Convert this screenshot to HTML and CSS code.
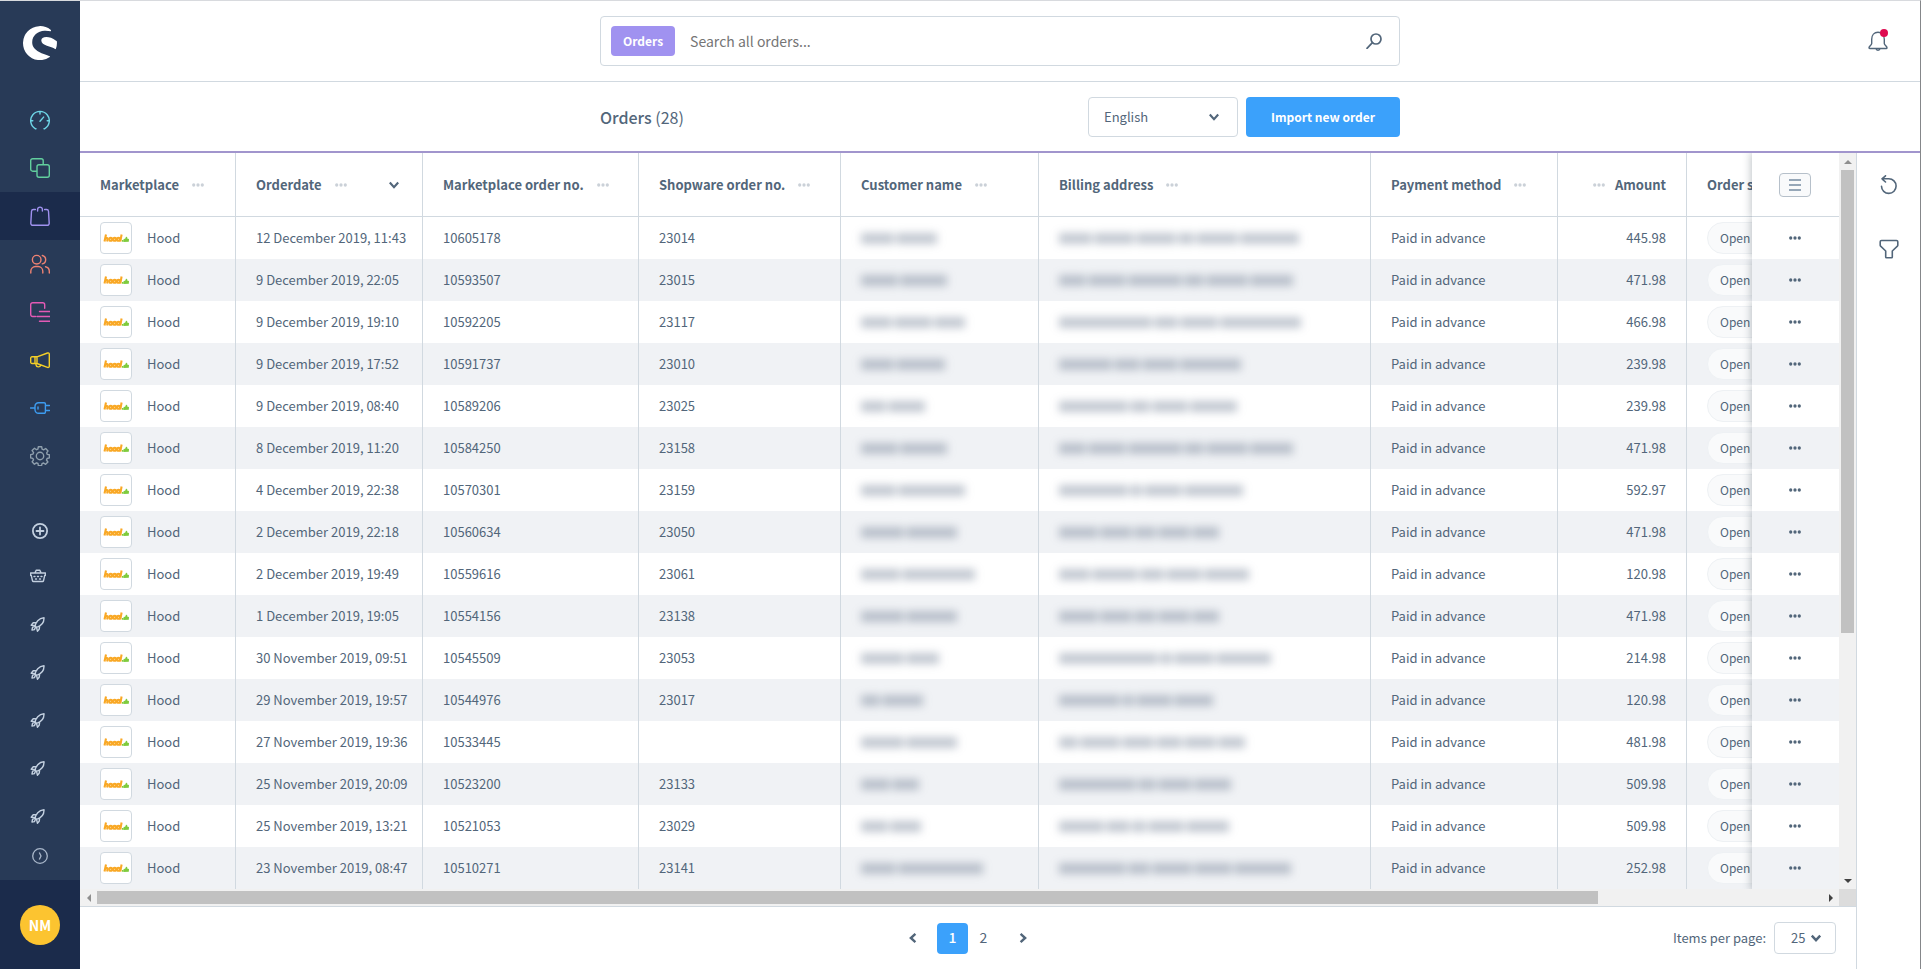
FILE: index.html
```html
<!DOCTYPE html>
<html lang="en">
<head>
<meta charset="utf-8">
<title>Orders</title>
<link rel="stylesheet" href="styles.css">
</head>
<body>
<svg class="defs" aria-hidden="true">
  <symbol id="i-rocket" viewBox="0 0 16 16"><path d="M5.2 10.2C5.6 6.4 8.6 2.2 14 1.8c.2 5-3.400 8.300-7.300 9.600zM5.600 6.600 3.200 6.800 1.200 9.200l3.600.2M9.600 10.600l-.4 2.600-1.800 2-.8-3.600M4.600 10.600 2.600 11.200l-.6 2.800 2.400-.4.8-1.600"/></symbol>
  <symbol id="i-dots" viewBox="0 0 14 4"><circle cx="2" cy="2" r="1.900"/><circle cx="7" cy="2" r="1.900"/><circle cx="12" cy="2" r="1.900"/></symbol>
  <symbol id="i-chevron" viewBox="0 0 10 10"><path d="m1.500 3 3.500 3.800L8.500 3"/></symbol>
  <symbol id="i-hood" viewBox="0 0 26 10">
    <g fill="none" stroke="#f9a825" stroke-width="2.100"><path d="M3 1.500 1.500 8.500M2.200 6c1-1.500 2.800-1.300 2.400.3L4.100 8.500"/><ellipse cx="7.700" cy="6.300" rx="1.500" ry="1.500"/><ellipse cx="11.700" cy="6.300" rx="1.500" ry="1.500"/><ellipse cx="15.500" cy="6.300" rx="1.500" ry="1.500"/><path d="M18.600 1.500 17.300 8.500"/></g>
    <path d="M19 7h1.300v1.700H19zM20.500 6.200l1.800-.7.700-1.800 1.200.3v1.600l1.800.5-.2 2.600-5.300.2z" fill="#7fcb3d"/>
  </symbol>
</svg>
<div class="app">
  <aside class="sidebar">
    <a class="logo" href="#" aria-label="Home">
      <svg viewBox="0 0 34 34"><path fill="#fff" d="M27.600 3.800A17 17 0 1 0 26.800 31c.3-.2.300-.5-.1-.7C21 27.800 9.200 25.600 9.200 16.300 9.200 9.300 15 5 21.400 4.700c2.600-.1 4.500.2 6.200.500.6.1.600-1 0-1.400zM33.900 15.500c-.2-.4-.4-.6-.8-.8-3.500-2.600-6.900-3.600-9.700-3.600-3.400 0-5.100 1.500-5.100 3.500 0 5.500 10.300 5.500 13.800 8.500.3.200.7.100.8-.3.900-2.300 1.200-4.800 1-7.300z"/></svg>
    </a>
    <nav class="nav">
      <a class="nav-item cyan" href="#" aria-label="Dashboard"><svg viewBox="0 0 20 20"><path d="M6 18.800H5.500A9.300 9.300 0 1 1 14.500 18.800H14M10 1.600V4M.8 10.800h2M17.200 10.800h2M10 11.300l3.600-4.200"/></svg></a>
      <a class="nav-item green" href="#" aria-label="Catalogues"><svg viewBox="0 0 20 20"><rect x="7" y="6.700" width="12.300" height="12.600" rx="2"/><path d="M6.500 13.200H2.700a2 2 0 0 1-2-2v-8.500a2 2 0 0 1 2-2h8.500a2 2 0 0 1 2 2v3.500"/></svg></a>
      <a class="nav-item violet active" href="#" aria-label="Orders" aria-current="page"><svg viewBox="0 0 20 20"><path d="M5.400 3.500H3.500a2 2 0 0 0-2 1.800L.8 17.200a2 2 0 0 0 2 2.100h14.400a2 2 0 0 0 2-2.100l-.7-11.900a2 2 0 0 0-2-1.800h-1.900M7.600 5V3.500a2.400 2.400 0 0 1 4.800 0V5"/></svg></a>
      <a class="nav-item coral" href="#" aria-label="Customers"><svg viewBox="0 0 20 20"><circle cx="6.700" cy="5.700" r="4.300"/><path d="M.8 19v-1.800a4.700 4.700 0 0 1 4.700-4.700h2.600a4.700 4.700 0 0 1 4.700 4.700V19M12.300 1.500a4.300 4.300 0 0 1 0 8.400M15.500 12.700a4.700 4.700 0 0 1 3.800 4.600V19"/></svg></a>
      <a class="nav-item pink" href="#" aria-label="Content"><svg viewBox="0 0 20 20"><path d="M5.500 14.500H2.700a2 2 0 0 1-2-2V2.700a2 2 0 0 1 2-2h10a2 2 0 0 1 2 2v3.500M9.500 9.500H20M7 14.500h13M9.500 19.300H20"/></svg></a>
      <a class="nav-item yellow" href="#" aria-label="Marketing"><svg viewBox="0 0 20 20"><path d="M7 6.800 17.500 3c1-.3 1.800.2 1.800 1.200v12c0 1-.8 1.500-1.800 1.200L7 13.500zM7 6.800H2a1.300 1.300 0 0 0-1.300 1.300v4.100A1.300 1.300 0 0 0 2 13.500h5M5 7v6.500M6 13.800v1a2.500 2.500 0 0 0 4.800.5"/></svg></a>
      <a class="nav-item blue" href="#" aria-label="Extensions"><svg viewBox="0 0 20 20"><path d="M.5 10H5M8.500 4.700h5.700a1.200 1.200 0 0 1 1.200 1.200v8.200a1.200 1.200 0 0 1-1.200 1.200H8.500A3.500 3.500 0 0 1 5 11.800V8.200a3.500 3.500 0 0 1 3.500-3.500zM15.500 7.500h4M15.500 12.500h4M8 9v2"/></svg></a>
      <a class="nav-item grey" href="#" aria-label="Settings"><svg viewBox="0 0 20 20"><circle cx="10" cy="10" r="3.700"/><path d="M8.300.8h3.400l.4 2.400 1.500.7 2.100-1.400 2.300 2.400-1.300 2 .6 1.500 2.100.4v3.100l-2.300.6-.6 1.500 1.400 2-2.300 2.300-2-1.300-1.600.6-.5 2.200H8.400L8 17.500l-1.500-.7-2.100 1.400-2.300-2.400 1.400-2-.7-1.400-2.200-.5V8.600L3 8.100l.6-1.500-1.500-2L4.500 2.300l2 1.400 1.400-.6z"/></svg></a>
    </nav>
    <nav class="nav nav-apps">
      <a class="nav-item nav-add" href="#" aria-label="Add"><svg viewBox="0 0 16 16"><circle cx="8" cy="8" r="7.100" stroke-width="1.800"/><path d="M8 4.500v7M4.500 8h7" stroke-width="1.800"/></svg></a>
      <a class="nav-item small" href="#" aria-label="Marketplaces"><svg viewBox="0 0 16 16"><path d="M.6 5h14.800v2.200h-.6l-1.300 5.600a1 1 0 0 1-1 .7h-9a1 1 0 0 1-1-.7L1.200 7.200H.6zM4.800 5l1.500-2.800h3.400L11.200 5M4 8.500h1M7.500 8.500h1M11 8.500h1M5.500 11h1M9.500 11h1"/></svg></a>
      <a class="nav-item small" href="#" aria-label="App 1"><svg><use href="#i-rocket"/></svg></a>
      <a class="nav-item small" href="#" aria-label="App 2"><svg><use href="#i-rocket"/></svg></a>
      <a class="nav-item small" href="#" aria-label="App 3"><svg><use href="#i-rocket"/></svg></a>
      <a class="nav-item small" href="#" aria-label="App 4"><svg><use href="#i-rocket"/></svg></a>
      <a class="nav-item small" href="#" aria-label="App 5"><svg><use href="#i-rocket"/></svg></a>
    </nav>
    <button class="collapse" aria-label="Expand menu"><svg viewBox="0 0 16 16"><circle cx="8" cy="8" r="7.300"/><path d="M7.300 4.500 9 8l-1.700 3.500"/></svg></button>
    <div class="user"><button class="avatar">NM</button></div>
  </aside>

  <div class="page">
    <header class="topbar">
      <form class="search">
        <span class="tag">Orders</span>
        <input class="search-input" type="text" aria-label="Search" placeholder="Search all orders...">
        <button class="icon-btn" type="button" aria-label="Search"><svg viewBox="0 0 16 16"><circle cx="10" cy="6" r="5"/><path d="M6.400 9.600 1 15.300"/></svg></button>
      </form>
      <button class="icon-btn bell" aria-label="Notifications"><svg viewBox="0 0 20 20"><path d="M3.700 12.500V8.300C3.700 4 6.300 1.200 10 1.200s6.300 2.800 6.300 7.100v4.200c0 1.500 2.700 3 2.700 4.200 0 .5-.3.800-.8.800H1.800c-.5 0-.8-.3-.8-.8 0-1.200 2.700-2.700 2.700-4.200zM8 17.800c.2 2 3.800 2 4 0"/></svg><span class="dot"></span></button>
    </header>

    <section class="smartbar">
      <div class="smartbar-inner">
        <h1 class="title">Orders <span class="count">(28)</span></h1>
        <div class="select language">
          <select aria-label="Language"><option>English</option></select>
          <svg class="chevron"><use href="#i-chevron"/></svg>
        </div>
        <button class="primary">Import new order</button>
      </div>
    </section>

    <div class="content">
      <main class="listing">
        <div class="grid-frame">
          <div class="scroller">
            <table class="grid">
              <colgroup><col class="c-market"><col class="c-date"><col class="c-mno"><col class="c-sno"><col class="c-name"><col class="c-address"><col class="c-payment"><col class="c-amount"><col class="c-status"><col class="c-actions"></colgroup>
              <thead><tr>
                <th scope="col"><div class="head">Marketplace<svg class="dots"><use href="#i-dots"/></svg></div></th>
                <th scope="col"><div class="head">Orderdate<svg class="dots"><use href="#i-dots"/></svg><svg class="chevron sort"><use href="#i-chevron"/></svg></div></th>
                <th scope="col"><div class="head">Marketplace order no.<svg class="dots"><use href="#i-dots"/></svg></div></th>
                <th scope="col"><div class="head">Shopware order no.<svg class="dots"><use href="#i-dots"/></svg></div></th>
                <th scope="col"><div class="head">Customer name<svg class="dots"><use href="#i-dots"/></svg></div></th>
                <th scope="col"><div class="head">Billing address<svg class="dots"><use href="#i-dots"/></svg></div></th>
                <th scope="col"><div class="head">Payment method<svg class="dots"><use href="#i-dots"/></svg></div></th>
                <th scope="col"><div class="head head-right">Amount<svg class="dots"><use href="#i-dots"/></svg></div></th>
                <th scope="col"><div class="head">Order status</div></th>
                <th scope="col" class="actions"><button class="columns-btn" aria-label="Columns"><svg viewBox="0 0 12 12"><path d="M0 1h12M0 6h12M0 11h12"/></svg></button></th>
              </tr></thead>
              <tbody id="rows"></tbody>
            </table>
          </div>
          <div class="bar-v"><span class="arrow up"></span><span class="track"><span class="thumb"></span></span><span class="arrow down"></span></div>
          <div class="bar-h"><span class="arrow left"></span><span class="track"><span class="thumb"></span></span><span class="arrow right"></span></div>
          <div class="corner"></div>
        </div>
        <footer class="pagination">
          <nav class="pages" aria-label="Pages">
            <button class="page-btn" aria-label="Previous"><svg class="chevron prev"><use href="#i-chevron"/></svg></button>
            <button class="page-btn current">1</button>
            <button class="page-btn">2</button>
            <button class="page-btn" aria-label="Next"><svg class="chevron next"><use href="#i-chevron"/></svg></button>
          </nav>
          <div class="per-page">
            <label for="limit">Items per page:</label>
            <div class="select limit">
              <select id="limit"><option>25</option></select>
              <svg class="chevron"><use href="#i-chevron"/></svg>
            </div>
          </div>
        </footer>
      </main>
      <aside class="tools">
        <button class="icon-btn" aria-label="Refresh"><svg viewBox="0 0 20 20"><path d="M2.500 11.200A7.300 7.300 0 1 0 9.800 3.800H3M6.500.8 3 3.800l3.500 3.200"/></svg></button>
        <button class="icon-btn" aria-label="Filter"><svg viewBox="0 0 20 20"><path d="M2.500 1.500h15c.8 0 1.300.5 1.300 1.300v3.400c0 .4-.1.700-.4 1L13.300 12v6c0 .5-.3.800-.8.800h-5c-.5 0-.8-.3-.8-.8v-6L1.600 7.200c-.3-.3-.4-.6-.4-1V2.800c0-.8.500-1.300 1.300-1.300z"/></svg></button>
      </aside>
    </div>
  </div>
</div>
<script src="app.js"></script>
</body>
</html>
```

FILE: styles.css
```css
* { box-sizing: border-box; }

:root {
  --text: #52667a;
  --line: #d1d9e0;
  --stripe: #f0f2f5;
  --font: "Noto Sans CJK SC", "Noto Sans", sans-serif;
}

body { margin: 0; font: 14px/20px var(--font); color: var(--text); background: #fff; }
button, input, select { font: inherit; color: inherit; }
button { padding: 0; border: 0; background: none; cursor: pointer; }
svg { display: block; fill: none; stroke: currentColor; }
.defs { position: absolute; width: 0; height: 0; }

.app { display: flex; height: 100vh; border-top: 1px solid #d8dade; border-right: 1px solid #85878a; overflow: hidden; }

.sidebar { display: flex; flex-direction: column; flex: none; width: 80px; background: #283a57; }
.logo { display: grid; place-items: center; flex: none; height: 84px; margin-bottom: 11px; }
.logo svg { width: 34px; height: 34px; stroke: none; }
.nav-item { display: grid; place-items: center; height: 48px; color: #c3d0e0; }
.nav-item svg { width: 20px; height: 20px; stroke-width: 1.4; stroke-linecap: round; stroke-linejoin: round; }
.active { background: #1b2b4b; }
.cyan { color: #6ed5e6; }
.green { color: #62cf9e; }
.violet { color: #a092f0; }
.coral { color: #ee8272; }
.pink { color: #e35ab5; }
.yellow { color: #f5cf27; }
.blue { color: #3d9cf0; }
.grey { color: #8f9fad; }
.nav-apps { margin-top: 30px; }
.nav-apps .nav-item svg { width: 16px; height: 16px; }
.nav-apps .nav-add { height: 42px; }
.small { padding-right: 4px; }
.collapse { display: grid; place-items: center; height: 32px; color: #a9b7ca; }
.collapse svg { width: 16px; height: 16px; stroke-width: 1.3; }
.user { display: grid; place-items: center; height: 89px; margin-top: auto; background: #1b2b4b; }
.avatar { width: 40px; height: 40px; border-radius: 50%; background: #fcc430; color: #fff; font-weight: 700; }

.page { display: flex; flex-direction: column; flex: 1; min-width: 0; }
.topbar { display: grid; grid-template-columns: 1fr minmax(0, 800px) 1fr; align-items: center; height: 81px; border-bottom: 1px solid var(--line); }
.search { grid-column: 2; display: flex; align-items: center; height: 50px; padding: 0 17px 0 10px; border: 1px solid var(--line); border-radius: 4px; }
.tag { padding: 5px 12px; border-radius: 4px; background: #a092f0; color: #fff; font-size: 12px; font-weight: 700; }
.search-input { flex: 1; min-width: 0; padding: 0 15px; border: 0; outline: 0; background: none; }
.search-input::placeholder { color: #757575; opacity: 1; }
.icon-btn svg { width: 16px; height: 16px; stroke-width: 1.700; stroke-linecap: round; stroke-linejoin: round; }
.bell { position: relative; justify-self: end; margin-right: 32px; }
.bell svg { width: 20px; height: 20px; stroke-width: 1.400; }
.dot { position: absolute; top: -2px; right: 0; width: 8px; height: 8px; border-radius: 50%; background: #de0b50; }

.smartbar { display: flex; justify-content: center; height: 71px; border-bottom: 2px solid #a195cd; }
.smartbar-inner { display: flex; align-items: center; gap: 8px; width: 800px; }
.title { flex: 1; margin: 0; font-size: 16px; font-weight: 500; line-height: 24px; }
.count { font-weight: 400; }
.select { position: relative; }
.select select { width: 100%; height: 100%; appearance: none; border: 1px solid var(--line); border-radius: 4px; background: #fff; }
.chevron { width: 12px; height: 12px; stroke-width: 1.800; }
.select .chevron { position: absolute; top: 50%; translate: 0 -50%; pointer-events: none; }
.language { width: 150px; height: 40px; font-size: 13px; }
.language select { padding: 0 15px; }
.language .chevron { right: 18px; }
.primary { width: 154px; height: 40px; border-radius: 4px; background: #3ba1fb; color: #fff; font-size: 12px; font-weight: 700; }

.content { display: flex; flex: 1; min-height: 0; }
.listing { display: flex; flex-direction: column; flex: 1; min-width: 0; border-right: 1px solid var(--line); }
.grid-frame { display: grid; grid-template: minmax(0, 1fr) 17px / minmax(0, 1fr) 17px; flex: 1; min-height: 0; border-bottom: 1px solid var(--line); }
.scroller { overflow: auto; scrollbar-width: none; }
.grid { width: 2026px; table-layout: fixed; border-collapse: separate; border-spacing: 0; }
.c-market { width: 156px; }
.c-date, .c-payment { width: 187px; }
.c-mno { width: 216px; }
.c-sno { width: 202px; }
.c-name { width: 198px; }
.c-address { width: 332px; }
.c-amount { width: 129px; }
.c-actions { width: 87px; }
th, td { padding: 0 20px; border-right: 1px solid var(--line); text-align: left; white-space: nowrap; }
th { position: sticky; top: 0; z-index: 1; height: 64px; border-bottom: 1px solid var(--line); background: #fff; font-size: 13px; font-weight: 700; }
td { height: 42px; background: #fff; font-size: 13px; }
tr:nth-child(even) td { background: var(--stripe); }
.head { display: flex; align-items: center; gap: 13px; }
.head-right { flex-direction: row-reverse; justify-content: flex-start; gap: 10px; }
.dots { width: 12px; height: 4px; fill: currentColor; stroke: none; }
.head .dots { color: #cbd1d8; }
.sort { margin-left: auto; margin-right: 2px; }
.market { display: flex; align-items: center; gap: 15px; }
.thumbnail { display: grid; place-items: center; width: 32px; height: 32px; border: 1px solid var(--line); border-radius: 4px; background: #fff; }
.thumbnail svg { width: 26px; height: 10px; stroke: none; }
.amount { text-align: right; }
.hidden-value { display: flex; gap: 4px; width: fit-content; background: rgba(82, 102, 122, .12); filter: blur(4px); }
.hidden-value span { height: 11px; background: currentColor; opacity: .26; }
.state { display: inline-block; width: 120px; padding: 5px 12px; border: 1px solid #eef1f4; border-radius: 16px; background: #f9fafb; font-size: 12px; vertical-align: middle; }
.actions { position: sticky; right: 0; z-index: 1; padding: 0 2px 0 0; border-right: 0; text-align: center; box-shadow: 0 0 8px 1px rgba(40, 55, 70, .3); clip-path: inset(0 0 0 -12px); }
th.actions { z-index: 2; }
.actions button { display: grid; place-items: center; margin: 0 auto; }
.row-btn { width: 32px; height: 24px; }
.columns-btn { width: 32px; height: 24px; border: 1px solid #b6c0ca; border-radius: 4px; background: #f9fafb; color: #758ca3; }
.columns-btn svg { width: 12px; height: 12px; stroke-width: 1.600; }

.bar-v, .bar-h { display: flex; background: #f1f1f1; }
.bar-v { flex-direction: column; }
.track { display: flex; flex: 1; }
.bar-v .track { flex-direction: column; padding: 0 2px; }
.bar-h .track { padding: 2px 0; }
.thumb { background: #c1c1c1; }
.bar-v .thumb { height: 66%; }
.bar-h .thumb { width: 87%; }
.arrow { display: grid; place-items: center; width: 17px; height: 17px; }
.arrow::before { content: ""; border: 4px solid transparent; }
.up::before { border-top-width: 0; border-bottom-color: #8f8f8f; }
.down::before { border-bottom-width: 0; border-top-color: #424242; }
.left::before { border-left-width: 0; border-right-color: #8f8f8f; }
.right::before { border-right-width: 0; border-left-color: #424242; }
.corner { background: #dcdcdc; }

.pagination { display: grid; grid-template-columns: 1fr auto 1fr; align-items: center; height: 62px; padding: 0 20px; }
.pages { grid-column: 2; display: flex; }
.page-btn { display: grid; place-items: center; width: 31px; height: 31px; border-radius: 4px; line-height: 18px; padding-bottom: 2px; }
.page-btn:first-child, .page-btn:last-child { width: 48px; padding-bottom: 0; }
.current { background: #3ba1fb; color: #fff; font-weight: 500; }
.prev { rotate: 90deg; }
.next { rotate: -90deg; }
.pages .chevron { stroke-width: 2; }
.per-page { display: flex; align-items: center; justify-self: end; gap: 8px; font-size: 13px; }
.limit { width: 62px; height: 32px; }
.limit select { padding: 0 16px; }
.limit .chevron { right: 14px; stroke-width: 2; }

.tools { display: flex; flex-direction: column; align-items: center; flex: none; gap: 44px; width: 63px; padding-top: 22px; }
.tools svg { width: 20px; height: 20px; stroke-width: 1.600; }
```

FILE: app.js
```js
// date, marketplace number, shop number, amount, masked name word widths, masked address word widths
const orders = [
  ["12 December 2019, 11:43", "10605178", "23014", "445.98", [32, 40], [32, 38, 38, 14, 40, 58]],
  ["9 December 2019, 22:05", "10593507", "23015", "471.98", [36, 46], [26, 36, 52, 18, 40, 42]],
  ["9 December 2019, 19:10", "10592205", "23117", "466.98", [30, 36, 30], [92, 22, 36, 80]],
  ["9 December 2019, 17:52", "10591737", "23010", "239.98", [32, 48], [52, 24, 34, 60]],
  ["9 December 2019, 08:40", "10589206", "23025", "239.98", [24, 36], [68, 18, 34, 46]],
  ["8 December 2019, 11:20", "10584250", "23158", "471.98", [36, 46], [26, 36, 52, 18, 40, 42]],
  ["4 December 2019, 22:38", "10570301", "23159", "592.97", [34, 66], [68, 10, 36, 58]],
  ["2 December 2019, 22:18", "10560634", "23050", "471.98", [42, 50], [38, 30, 20, 30, 26]],
  ["2 December 2019, 19:49", "10559616", "23061", "120.98", [38, 72], [30, 44, 22, 34, 44]],
  ["1 December 2019, 19:05", "10554156", "23138", "471.98", [42, 50], [38, 30, 20, 30, 26]],
  ["30 November 2019, 09:51", "10545509", "23053", "214.98", [42, 32], [98, 10, 38, 54]],
  ["29 November 2019, 19:57", "10544976", "23017", "120.98", [18, 40], [60, 10, 34, 38]],
  ["27 November 2019, 19:36", "10533445", "", "481.98", [42, 50], [18, 38, 30, 24, 30, 26]],
  ["25 November 2019, 20:09", "10523200", "23133", "509.98", [28, 26], [76, 16, 32, 36]],
  ["25 November 2019, 13:21", "10521053", "23029", "509.98", [26, 30], [44, 22, 12, 34, 42]],
  ["23 November 2019, 08:47", "10510271", "23141", "252.98", [34, 84], [66, 20, 38, 36, 56]]
];

const masked = widths =>
  `<div class="hidden-value">${widths.map(w => `<span style="width:${w}px"></span>`).join("")}</div>`;

document.getElementById("rows").innerHTML = orders.map(([date, mno, sno, amount, name, address]) => `
  <tr>
    <td><div class="market"><span class="thumbnail"><svg><use href="#i-hood"/></svg></span>Hood</div></td>
    <td>${date}</td>
    <td>${mno}</td>
    <td>${sno}</td>
    <td>${masked(name)}</td>
    <td>${masked(address)}</td>
    <td>Paid in advance</td>
    <td class="amount">${amount}</td>
    <td><span class="state">Open</span></td>
    <td class="actions"><button class="row-btn" aria-label="Order actions"><svg class="dots"><use href="#i-dots"/></svg></button></td>
  </tr>`).join("");
```
